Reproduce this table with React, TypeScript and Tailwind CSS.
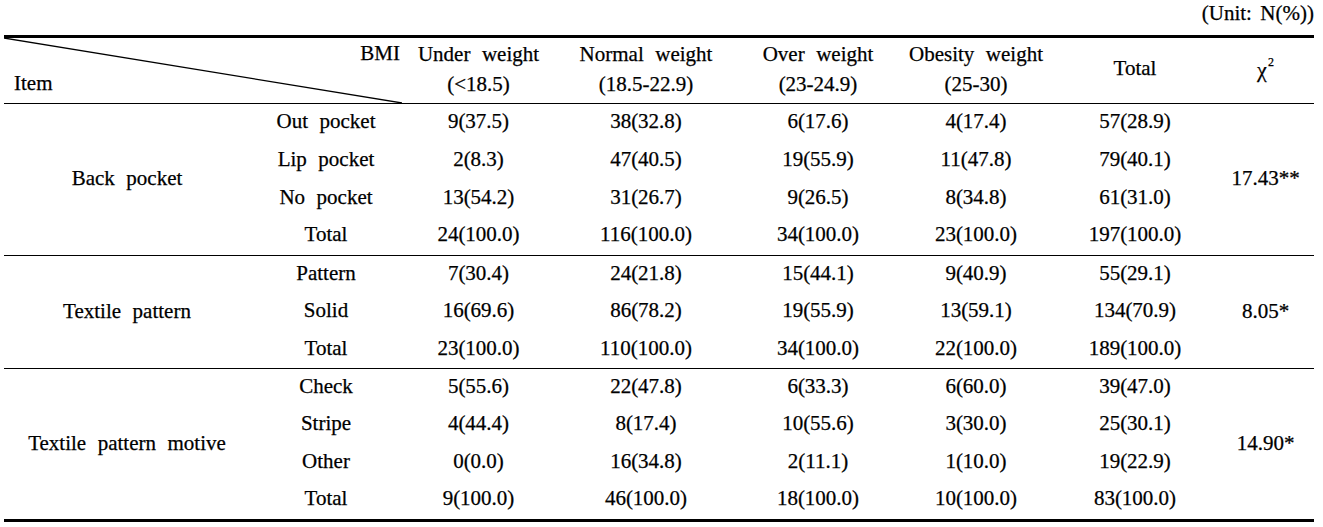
import React from "react";

type Row = { label: string; vals: string[] };
type Block = { item: string; chi: string; rows: Row[]; rowH: string; border: string };

const blocks: Block[] = [
  {
    item: "Back pocket",
    chi: "17.43**",
    rowH: "h-[37.75px]",
    border: "border-b border-black",
    rows: [
      { label: "Out pocket", vals: ["9(37.5)", "38(32.8)", "6(17.6)", "4(17.4)", "57(28.9)"] },
      { label: "Lip pocket", vals: ["2(8.3)", "47(40.5)", "19(55.9)", "11(47.8)", "79(40.1)"] },
      { label: "No pocket", vals: ["13(54.2)", "31(26.7)", "9(26.5)", "8(34.8)", "61(31.0)"] },
      { label: "Total", vals: ["24(100.0)", "116(100.0)", "34(100.0)", "23(100.0)", "197(100.0)"] },
    ],
  },
  {
    item: "Textile pattern",
    chi: "8.05*",
    rowH: "h-[37.33px]",
    border: "border-b border-black",
    rows: [
      { label: "Pattern", vals: ["7(30.4)", "24(21.8)", "15(44.1)", "9(40.9)", "55(29.1)"] },
      { label: "Solid", vals: ["16(69.6)", "86(78.2)", "19(55.9)", "13(59.1)", "134(70.9)"] },
      { label: "Total", vals: ["23(100.0)", "110(100.0)", "34(100.0)", "22(100.0)", "189(100.0)"] },
    ],
  },
  {
    item: "Textile pattern motive",
    chi: "14.90*",
    rowH: "h-[37.5px]",
    border: "border-b-[3px] border-black",
    rows: [
      { label: "Check", vals: ["5(55.6)", "22(47.8)", "6(33.3)", "6(60.0)", "39(47.0)"] },
      { label: "Stripe", vals: ["4(44.4)", "8(17.4)", "10(55.6)", "3(30.0)", "25(30.1)"] },
      { label: "Other", vals: ["0(0.0)", "16(34.8)", "2(11.1)", "1(10.0)", "19(22.9)"] },
      { label: "Total", vals: ["9(100.0)", "46(100.0)", "18(100.0)", "10(100.0)", "83(100.0)"] },
    ],
  },
];

const valW = ["w-[153px]", "w-[182px]", "w-[162px]", "w-[154px]", "w-[164px]"];

export default function App() {
  return (
    <div
      className="w-[1323px] h-[527px] bg-white text-black text-[21px] [word-spacing:0.3em] [-webkit-text-stroke:0.25px_black]"
      style={{ fontFamily: '"Liberation Serif", "Times New Roman", serif' }}
    >
      <div className="h-[35px] flex justify-end pr-[9px] leading-[26px] [word-spacing:0.15em]">(Unit: N(%))</div>
      <div className="ml-[4px] w-[1310px] border-t-[3px] border-black">
        {/* header */}
        <div className="flex h-[66px] border-b border-black">
          <div className="relative w-[398px] flex flex-col justify-between leading-[30px]">
            <svg className="absolute inset-0" width="398" height="65" viewBox="0 0 398 65">
              <line x1="0" y1="0" x2="398" y2="65" stroke="black" strokeWidth="1.3" />
            </svg>
            <div className="text-right pr-[2px]">BMI</div>
            <div className="pl-[10px] pb-[5px]">Item</div>
          </div>
          <div className="w-[153px] flex flex-col justify-center items-center leading-[30px] pb-[4px]">
            <div>Under weight</div>
            <div>(&lt;18.5)</div>
          </div>
          <div className="w-[182px] flex flex-col justify-center items-center leading-[30px] pb-[4px]">
            <div>Normal weight</div>
            <div>(18.5-22.9)</div>
          </div>
          <div className="w-[162px] flex flex-col justify-center items-center leading-[30px] pb-[4px]">
            <div>Over weight</div>
            <div>(23-24.9)</div>
          </div>
          <div className="w-[154px] flex flex-col justify-center items-center leading-[30px] pb-[4px]">
            <div>Obesity weight</div>
            <div>(25-30)</div>
          </div>
          <div className="w-[164px] flex items-center justify-center pb-[3px]">Total</div>
          <div className="w-[97px] flex items-center justify-center pb-[3px]">
            <span className="text-[22px]">
              χ<span className="text-[12px] relative -top-[11px] ml-[1px]">2</span>
            </span>
          </div>
        </div>
        {blocks.map((b) => (
          <div key={b.item} className={`flex ${b.border}`}>
            <div className="w-[246px] flex items-center justify-center pb-[1px]">{b.item}</div>
            <div className="flex flex-col">
              {b.rows.map((r, i) => (
                <div key={i} className={`flex items-center pb-[2px] ${b.rowH}`}>
                  <div className="w-[152px] text-center">{r.label}</div>
                  {r.vals.map((v, j) => (
                    <div key={j} className={`${valW[j]} text-center`}>
                      {v}
                    </div>
                  ))}
                </div>
              ))}
            </div>
            <div className="w-[97px] flex items-center justify-center pb-[1px]">{b.chi}</div>
          </div>
        ))}
      </div>
    </div>
  );
}
